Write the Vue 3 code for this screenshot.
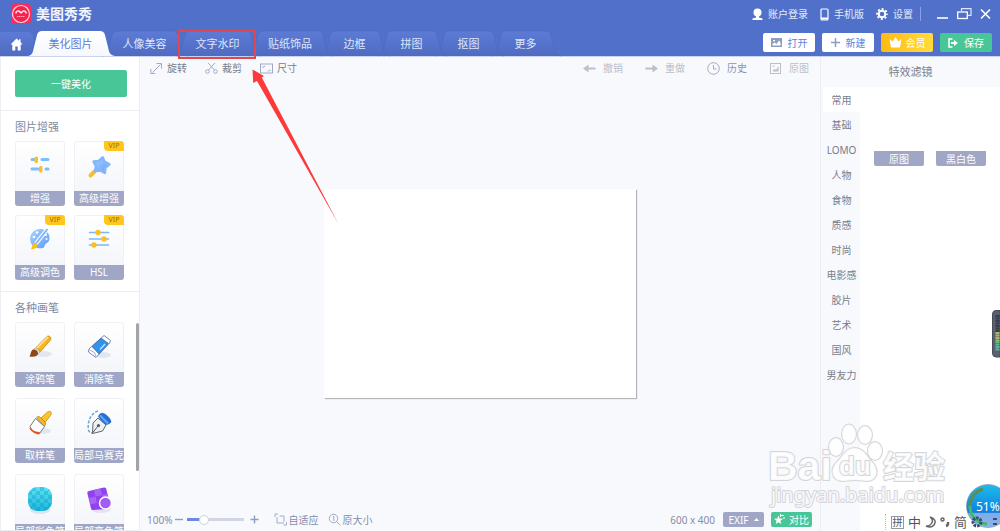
<script setup>
import { ref } from 'vue'

const tabs = [
  { name: '美化图片', w: 75 },
  { name: '人像美容', w: 73 },
  { name: '文字水印', w: 73 },
  { name: '贴纸饰品', w: 72 },
  { name: '边框', w: 57 },
  { name: '拼图', w: 57 },
  { name: '抠图', w: 57 },
  { name: '更多', w: 57 },
]
const activeTab = ref('美化图片')
const tabPath = (w) =>
  `M-5 25 C0 24 0 20 1 16 L4 4 Q5 0 9 0 H${w - 8} Q${w - 4} 0 ${w - 3} 4 L${w} 16 C${w + 1} 20 ${w + 1} 24 ${w + 7} 25`

const enhanceTools = [
  { name: '增强', icon: 'enhance' },
  { name: '高级增强', icon: 'wand', vip: true },
  { name: '高级调色', icon: 'palette', vip: true },
  { name: 'HSL', icon: 'hsl', vip: true },
]
const brushTools = [
  { name: '涂鸦笔', icon: 'brush' },
  { name: '消除笔', icon: 'eraser' },
  { name: '取样笔', icon: 'paint' },
  { name: '局部马赛克', icon: 'pen' },
  { name: '局部彩色笔', icon: 'mosaic' },
  { name: '局部变色笔', icon: 'recolor' },
]

const checks = []
for (let r = 0; r < 6; r++)
  for (let c = 0; c < 6; c++)
    if ((r + c) % 2) checks.push(`<rect x="${13 + c * 4}" y="${13 + r * 4}" width="4" height="4"/>`)

const art = {
  enhance: `<g stroke-width="3" stroke-linecap="round"><path d="M17 18.500h3M27 18.500h6M17 28h6M31 28h2" stroke="#7cbdfb"/></g><rect x="19.500" y="15.500" width="3.500" height="6.500" rx="1.500" fill="#fdbf1f"/><rect x="24" y="25" width="3.500" height="6.500" rx="1.500" fill="#fdbf1f"/>`,
  wand: `<path d="M16.500 34.500l4-4" stroke="#fdbf1f" stroke-width="4" stroke-linecap="round"/><path d="M28.600 16.300L30.800 21L35.400 23.200L31.400 26.800L30.900 32L26.100 29.400L20.800 30.300L22 25.200L19.600 20.600L24.800 20Z" fill="url(#gBlue)" stroke="#83b6fa" stroke-width="2.500" stroke-linejoin="round"/>`,
  palette: `<path d="M15.500 27c-2-7 3-13 10-13 6 0 9.500 5 9 10-.3 3-2.500 4-4 5-1.500 1.500 0 4-4 4.300-5 .3-9.700-2-11-6.300z" fill="url(#gBlue)"/><g fill="#fff"><circle cx="19" cy="22" r="1.300"/><circle cx="22" cy="17.500" r="1.300"/><circle cx="31" cy="20" r="1"/><circle cx="31.500" cy="24" r="1"/></g><path d="M33 13.500L21 28.500" stroke="#fff" stroke-width="4"/><path d="M32.500 14L21 28.500" stroke="#7fb4f7" stroke-width="2"/><path d="M18 29c2-2 5 0 4 2.500-1 2.500-4 3-6 2.500 1-1 .7-3 2-5z" fill="#fdbf1f"/>`,
  hsl: `<g stroke="#7cb8f7" stroke-width="1.600" stroke-linecap="round"><path d="M15.500 17.500h19M15.500 24h19M15.500 30h19"/></g><g fill="#fdbf1f"><circle cx="24" cy="17.500" r="2.700"/><circle cx="30" cy="24" r="2.700"/><circle cx="20" cy="30" r="2.700"/></g>`,
  brush: `<ellipse cx="28" cy="32" rx="9" ry="3" fill="#e3e6ef"/><path d="M21 25.500L32 14.500c2-1.500 5 1 3.500 3.500L25.500 29.500z" fill="#f7b520" stroke="#c58318" stroke-width=".8"/><path d="M22 26L33 15" stroke="#ffe48b" stroke-width="1.700"/><path d="M20 26l5 4-2 2-5-4z" fill="#eceef2" stroke="#a67a3c" stroke-width=".5"/><path d="M18 27.500c3-.5 5.500 2 5 4.500-1 3-5 3-8.500 2.500 1.500-1.500.5-5 3.500-7z" fill="#8f4a14"/>`,
  eraser: `<ellipse cx="29" cy="33" rx="8" ry="3" fill="#e3e6ef"/><g stroke="#506c9b" stroke-width=".8" stroke-linejoin="round"><path d="M30 13.500l6.500 5-1 2.500L22 35.500l-7.500-5.500.5-3z" fill="#fff"/><path d="M27 16l7.500 5.500-9.500 10.500-7-7.500z" fill="#2f92ec"/></g><path d="M26 27.500l5-5.500" stroke="#b7e2ff" stroke-width="1.500"/><path d="M22 34.500l-1.500-4-5-2.500" fill="none" stroke="#8b9bb5" stroke-width=".8"/>`,
  paint: `<ellipse cx="28" cy="33" rx="8" ry="3" fill="#e3e6ef"/><path d="M26 20l6.500-6c3-2 5 1 3 3.500L30 24.500z" fill="#ffc528" stroke="#c58d16" stroke-width=".8"/><path d="M21.500 19.500c2-2 3.500-.5 4.500.5l4 4c1 1.500 1 3-1 4.500z" fill="#f5b82a" stroke="#b97e1c" stroke-width=".8"/><path d="M20.500 20.500l9 8-5 7c-4 0-8-3-9.500-7z" fill="#fff" stroke="#74777f" stroke-width="1"/><path d="M15 29.500c2 3 6 4.500 10 4.500l-1 2.500c-4-.5-8-3-9.500-6z" fill="#e85222"/>`,
  pen: `<path d="M24 13c-7 2-11 11-9.500 19 .5 2 2 3 4 3" fill="none" stroke="#6ea7dd" stroke-width="1.500" stroke-dasharray="3 1.500"/><path d="M24.500 18.500c1-3 3.500-4 6-2.500 3 1.500 6 5 6.500 8-1.500 2-4 2.500-6.500 2.500z" fill="#2471dc" stroke="#1550ac" stroke-width=".7"/><path d="M26 17.500l8 8" stroke="#63a5fa" stroke-width="2"/><path d="M24 20l8 7-3.500 6-10 2.500.5-10.500z" fill="#edf1f4" stroke="#5d6672" stroke-width="1"/><path d="M18.500 35l5.500-7" stroke="#505965" stroke-width="1"/><circle cx="24.500" cy="27.500" r="1.600" fill="#505965"/>`,
  mosaic: `<ellipse cx="25" cy="36" rx="10" ry="4" fill="#d8e7ef"/><rect x="13" y="13" width="24" height="24" rx="9" fill="url(#gCyan)"/><g fill="#0093bd" opacity=".3" clip-path="url(#cBlob)">${checks.join('')}</g>`,
  recolor: `<ellipse cx="27" cy="35" rx="10" ry="4" fill="#e5e1f3"/><path d="M15 17l15-3.500q2-.3 2.300 1.500L36 32l-3 3-14 1q-1.500 0-2-1.500L13.300 19q-.3-1.500 1.700-2z" fill="#9141ee"/><path d="M20 16l6.500-1.500 1.500 6.500-6.500 1.500zM15 24l6.500-1.500 1.500 6.500-6.500 1.500zM28 21l5.500-1.500 1 5.500-5 2z" fill="#a665f5"/><circle cx="31.500" cy="29" r="6" fill="#a05cf5" stroke="#fff" stroke-width="1.500"/>`,
}

const glyph = {
  rotate: `<path d="M2.500 10.500l8-8M6.500 1.500h5v5M.8 7v4.500h4.500" />`,
  crop: `<circle cx="2.500" cy="9.500" r="1.800"/><circle cx="10.500" cy="9.500" r="1.800"/><path d="M3.500 8L10 .8M9.500 8L3 .8"/>`,
  size: `<rect x=".5" y="2" width="12" height="9"/><path d="M3 6V4.300h3M10 7.500v1.500H7.500" stroke-dasharray="1.500 .8"/>`,
  undo: `<path d="M12.500 6.500H4" stroke-width="2"/><path d="M0 6.500L5.500 2.500v8z" fill="currentColor" stroke="none"/>`,
  redo: `<path d="M.5 6.500H9" stroke-width="2"/><path d="M13 6.500L7.500 2.500v8z" fill="currentColor" stroke="none"/>`,
  history: `<circle cx="6.500" cy="6.500" r="5.800"/><path d="M6.500 3v4h3"/>`,
  original: `<rect x="1.500" y="1.500" width="10" height="10"/><path d="M4 9.500V8l2-1 1 1 2.500-4v5.500z" fill="currentColor" stroke="none"/><path d="M3.500 4h2"/>`,
  fit: `<path d="M1 4V1h3M3 4v6h7M5.500 3H10v6M9.500 12H12.500V9"/>`,
  actual: `<circle cx="5.500" cy="5.500" r="4.200"/><path d="M8.800 8.800l3.500 3.500M4.800 4l1-.5V8"/>`,
}

const leftActions = [
  { name: '旋转', icon: 'rotate' },
  { name: '裁剪', icon: 'crop' },
  { name: '尺寸', icon: 'size' },
]
const rightActions = [
  { name: '撤销', icon: 'undo', off: true },
  { name: '重做', icon: 'redo', off: true },
  { name: '历史', icon: 'history' },
  { name: '原图', icon: 'original', off: true },
]

const categories = ['常用', '基础', 'LOMO', '人物', '食物', '质感', '时尚', '电影感', '胶片', '艺术', '国风', '男友力']
const category = ref('常用')
const filters = ['原图', '黑白色']
const zoom = ref(25)
</script>

<template>
  <div class="app">
    <svg class="defs" aria-hidden="true">
      <defs>
        <linearGradient id="gBlue" x1="0" y1="0" x2="1" y2="1"><stop offset="0" stop-color="#abd3ff" /><stop offset="1" stop-color="#5f9df5" /></linearGradient>
        <linearGradient id="gCyan" x1="0" y1="0" x2="0" y2="1"><stop offset="0" stop-color="#5be3f2" /><stop offset="1" stop-color="#1fb4dc" /></linearGradient>
        <linearGradient id="gTab" x1="0" y1="0" x2="0" y2="1"><stop offset="0" stop-color="#5d7bd6" /><stop offset="1" stop-color="#4f6bc1" /></linearGradient>
        <linearGradient id="gTabOn" x1="0" y1="0" x2="0" y2="1"><stop offset="0" stop-color="#ffffff" /><stop offset="1" stop-color="#f6f8fd" /></linearGradient>
        <linearGradient id="gBall" x1="0" y1="0" x2="0" y2="1"><stop offset="0" stop-color="#1cbcec" /><stop offset=".65" stop-color="#117fdc" /><stop offset=".66" stop-color="#7faae9" /><stop offset="1" stop-color="#8db3ec" /></linearGradient>
        <clipPath id="cBlob"><rect x="13" y="13" width="24" height="24" rx="9" /></clipPath>
      </defs>
    </svg>

    <header class="top">
      <div class="titlebar">
        <svg class="logo" viewBox="0 0 20 20" aria-hidden="true">
          <rect width="20" height="20" rx="4" fill="#fb2c5b" />
          <circle cx="10" cy="10" r="8.500" fill="#f8224f" stroke="#ffd5de" stroke-width="1.200" />
          <path d="M5 9.500V8.500Q7 5.500 9 8l1 .8 1-.8q2-2.500 4 .5v1" fill="none" stroke="#fff" stroke-width="1.400" />
          <path d="M6 12.500h8" stroke="#ffb7c6" stroke-width="1.200" stroke-dasharray="1.500 .5" />
        </svg>
        <h1>美图秀秀</h1>
        <nav class="account">
          <button class="plain">
            <svg width="11" height="13" viewBox="0 0 11 13"><circle cx="5.500" cy="4.500" r="4" fill="#fff" /><path d="M4 8h3v1.500l3.500 1V12H.5v-1.500l3.500-1z" fill="#fff" /></svg>账户登录
          </button>
          <button class="plain">
            <svg width="9" height="13" viewBox="0 0 9 13"><rect x="1" y="1" width="7" height="11" rx="1" fill="none" stroke="#fff" stroke-width="1.200" /><path d="M1 10.500h7" stroke="#fff" stroke-width="2" /></svg>手机版
          </button>
          <button class="plain">
            <svg width="12" height="12" viewBox="0 0 12 12"><circle cx="6" cy="6" r="3.300" fill="none" stroke="#fff" stroke-width="2" /><circle cx="6" cy="6" r="5" fill="none" stroke="#fff" stroke-width="1.800" stroke-dasharray="2 1.927" stroke-dashoffset="1" /></svg>设置
          </button>
        </nav>
        <div class="window">
          <button class="plain" aria-label="最小化"><svg width="12" height="14" viewBox="0 0 12 14"><path d="M0 11h11" stroke="#fff" stroke-width="1.600" /></svg></button>
          <button class="plain" aria-label="还原"><svg width="15" height="14" viewBox="0 0 15 14"><path d="M4.500 4V1.700h9.500v6.600h-3" fill="none" stroke="#dfe6fa" stroke-width="1.200" /><rect x=".7" y="5" width="9.600" height="6.500" fill="none" stroke="#fff" stroke-width="1.300" /></svg></button>
          <button class="plain" aria-label="关闭"><svg width="11" height="14" viewBox="0 0 11 14"><path d="M1 2.500l9 9M10 2.500l-9 9" stroke="#fff" stroke-width="1.600" /></svg></button>
        </div>
      </div>
      <div class="tabbar">
        <button class="home" aria-label="首页">
          <svg width="13" height="13" viewBox="0 0 13 13"><path d="M6.500.5L.5 6.500h1.800V12.500h3V8.500h2.400v4h3V6.500h1.800L10.500 4V1.200H9v1.500z" fill="#fff" /></svg>
        </button>
        <button
          v-for="(t, i) in tabs"
          :key="t.name"
          class="tab"
          :class="{ on: t.name === activeTab }"
          :style="{ width: t.w + 'px', zIndex: t.name === activeTab ? 20 : 10 - i }"
          @click="activeTab = t.name"
        >
          <svg class="shape" :viewBox="`0 0 ${t.w} 25`" aria-hidden="true">
            <path :d="tabPath(t.w)" :fill="t.name === activeTab ? 'url(#gTabOn)' : 'url(#gTab)'" stroke="#4a66bb" :stroke-width="t.name === activeTab ? 0 : 0.5" />
          </svg>
          <span>{{ t.name }}</span>
        </button>
        <div class="files">
          <button class="file">
            <svg width="11" height="9" viewBox="0 0 11 9"><rect width="11" height="9" fill="#909dc2" /><path d="M1.500 7.500V6l2-1.500L5.500 6l2.500-3.500 1.500 2v3zM2 2h2v1.300H2z" fill="#fff" /></svg>打开
          </button>
          <button class="file">
            <svg width="9" height="9" viewBox="0 0 9 9"><path d="M4.500 0v9M0 4.500h9" stroke="#909dc2" stroke-width="1.500" /></svg>新建
          </button>
          <button class="file gold">
            <svg width="13" height="11" viewBox="0 0 13 11"><path d="M.5 2l3 2.500L6.500 0l3 4.500 3-2.500-1.500 8.500H2z" fill="#fff" /></svg>会员
          </button>
          <button class="file green">
            <svg width="10" height="10" viewBox="0 0 10 10"><path d="M4.500 1H1v8h3.500" fill="none" stroke="#fff" stroke-width="1.500" /><path d="M3 4h3V2l4 3-4 3V6H3z" fill="#fff" /></svg>保存
          </button>
        </div>
      </div>
    </header>

    <main class="body">
      <aside class="side">
        <div class="auto"><button>一键美化</button></div>
        <section class="group">
          <h2>图片增强</h2>
          <div class="cards">
            <button v-for="t in enhanceTools" :key="t.name" class="card">
              <svg viewBox="0 0 50 50" v-html="art[t.icon]" />
              <span class="name">{{ t.name }}</span>
              <span v-if="t.vip" class="vip">VIP</span>
            </button>
          </div>
        </section>
        <section class="group brushes">
          <h2>各种画笔</h2>
          <div class="cards">
            <button v-for="t in brushTools" :key="t.name" class="card">
              <svg viewBox="0 0 50 50" v-html="art[t.icon]" />
              <span class="name">{{ t.name }}</span>
            </button>
          </div>
          <div class="scroll"></div>
        </section>
      </aside>

      <section class="work">
        <div class="toolbar">
          <div class="acts">
            <button v-for="a in leftActions" :key="a.name" class="act"><svg viewBox="0 0 13 13" v-html="glyph[a.icon]" />{{ a.name }}</button>
          </div>
          <div class="acts wide">
            <button v-for="a in rightActions" :key="a.name" class="act" :class="{ off: a.off }"><svg viewBox="0 0 13 13" v-html="glyph[a.icon]" />{{ a.name }}</button>
          </div>
        </div>
        <div class="stage"><div class="paper"></div></div>
        <div class="status">
          <label for="zoom">100%</label>
          <button class="step" aria-label="缩小"><svg width="9" height="9" viewBox="0 0 9 9"><path d="M0 4.500h8" stroke="#909cc4" stroke-width="1.400" /></svg></button>
          <input id="zoom" v-model="zoom" type="range" min="0" max="100" :style="{ '--fill': zoom + '%' }" />
          <button class="step" aria-label="放大"><svg width="9" height="9" viewBox="0 0 9 9"><path d="M4.500 .5v8M.5 4.500h8" stroke="#909cc4" stroke-width="1.400" /></svg></button>
          <button class="view fit"><svg viewBox="0 0 13 13" v-html="glyph.fit" />自适应</button>
          <button class="view"><svg viewBox="0 0 13 13" v-html="glyph.actual" />原大小</button>
          <span class="dims">600 x 400</span>
          <button class="pill">EXIF<svg width="5" height="3" viewBox="0 0 5 3"><path d="M0 3L2.500 0 5 3z" fill="#fff" /></svg></button>
          <button class="pill green">
            <svg width="11" height="11" viewBox="0 0 11 11"><path d="M4.500 1.500l1.200 3 3.300.2-2.500 2 .8 3.300-2.800-1.800L1.700 10l.8-3.300-2.500-2 3.300-.2z" fill="#fff" /><path d="M7 1.500h3M9 4h2M6.500 0v3" stroke="#fff" /></svg>对比
          </button>
        </div>
      </section>

      <aside class="effects">
        <h2>特效滤镜</h2>
        <div class="panes">
          <nav class="cats">
            <button v-for="c in categories" :key="c" :class="{ on: c === category }" @click="category = c">{{ c }}</button>
          </nav>
          <div class="filters">
            <button v-for="f in filters" :key="f">{{ f }}</button>
          </div>
        </div>
      </aside>
    </main>

    <svg class="note" width="180" height="200" viewBox="0 0 180 200" aria-hidden="true">
      <rect x="9" y="1" width="76" height="27" fill="none" stroke="#e2474f" stroke-width="2" />
      <path d="M82.500 39.500L94 46l-2.200 1.600L168.500 194 87 51l-3.800 2z" fill="#fb3a39" />
    </svg>

    <svg class="mark" width="184" height="92" viewBox="0 0 184 92" aria-hidden="true">
      <g fill="#fff" fill-opacity=".85" stroke="#d3d5da" stroke-width="2" stroke-linejoin="round" paint-order="stroke">
        <text x="2" y="61" font-size="41" font-family="Liberation Sans, sans-serif" font-weight="700">Bai</text>
        <ellipse cx="70" cy="28" rx="7" ry="9" />
        <ellipse cx="83" cy="15" rx="7" ry="9.500" />
        <ellipse cx="99" cy="16" rx="7" ry="9" />
        <ellipse cx="109" cy="32" rx="7" ry="9" />
        <path d="M89 29c9 0 12 9 17 14 8 8 5 19-5 19-4 0-7-1-12-1s-8 1-12 1c-11 0-14-11-6-19 6-6 9-14 18-14z" />
        <text x="73" y="56" font-size="26" font-family="Liberation Sans, sans-serif" font-weight="700">du</text>
        <text x="117" y="59" font-size="31" font-family="Noto Sans CJK SC, sans-serif" font-weight="700">经验</text>
        <text x="5" y="83" font-size="20" font-family="Noto Sans, sans-serif">jingyan.baidu.com</text>
      </g>
    </svg>

    <svg class="meter" width="8" height="48" viewBox="0 0 8 48" aria-hidden="true">
      <path d="M8 .5H4Q.5 .5 .5 4v39q0 4 3.500 4H8z" fill="#5b6071" stroke="#484c5b" />
      <path d="M5.500 5v17" stroke="#383d4b" stroke-width="4" stroke-dasharray="2 .5" />
      <path d="M5.500 22v9" stroke="#a4bd63" stroke-width="4" stroke-dasharray="2 .5" />
      <path d="M5.500 31v10" stroke="#58b6a0" stroke-width="4" stroke-dasharray="2 .5" />
    </svg>

    <div class="ime">
      <span class="boxed">拼</span>
      <span>中</span>
      <svg width="11" height="12" viewBox="0 0 11 12"><path d="M5 1q5 4 0 8-2 1.500-4 1 5 2.500 8-1Q12.500 3.500 5 1z" fill="none" stroke="#666" stroke-width="1.500" /></svg>
      <svg width="10" height="12" viewBox="0 0 10 12"><circle cx="2.500" cy="3.500" r="1.500" fill="none" stroke="#666" stroke-width="1.500" /><path d="M8 6v1.500q0 2-2 2.500" stroke="#666" stroke-width="2.500" fill="none" /></svg>
      <span>简</span>
    </div>

    <svg class="ball" width="35" height="46" viewBox="0 0 35 46" aria-hidden="true">
      <circle cx="23" cy="23" r="21.500" fill="url(#gBall)" stroke="#7b8ea0" stroke-opacity=".6" />
      <path d="M18 6A17.500 17.500 0 0 0 5 23" fill="none" stroke="#638b50" stroke-width="3" />
      <path d="M5 23A17.500 17.500 0 0 0 22 41" fill="none" stroke="#43b867" stroke-width="3" />
      <circle cx="12" cy="39" r="4" fill="none" stroke="#34506f" stroke-width="3" stroke-dasharray="2.500 1" />
      <path d="M28 36h4M28 41h4" stroke="#34506f" stroke-width="2" />
      <text x="11" y="28" font-size="12" font-family="Noto Sans, sans-serif" fill="#fff">51%</text>
    </svg>
  </div>
</template>

<style>
body {
  overflow: hidden;
}
</style>

<style scoped>
.app {
  position: relative;
  display: flex;
  flex-direction: column;
  height: 100vh;
  overflow: hidden;
  background: #f8f9fd;
  color: #777d8b;
  font: 10px/14px "Noto Sans", "Noto Sans CJK SC", sans-serif;
}
button {
  padding: 0;
  border: 0;
  background: none;
  color: inherit;
  font: inherit;
  white-space: nowrap;
  cursor: pointer;
}
h1,
h2 {
  margin: 0;
}
svg {
  flex: none;
}
.defs {
  position: absolute;
  width: 0;
  height: 0;
}
.top {
  background: #5070c9;
  border-bottom: 1px solid #c9d3ef;
}
.titlebar {
  display: flex;
  align-items: center;
  height: 28px;
  padding: 0 9px 0 11px;
  color: #e6ebfa;
}
.logo {
  width: 20px;
  height: 20px;
}
h1 {
  margin-left: 5px;
  color: #f0f3fd;
  font-size: 14px;
  line-height: 20px;
  font-weight: 700;
}
.account {
  display: flex;
  gap: 12px;
  margin-left: auto;
  padding-right: 7px;
}
.plain {
  display: flex;
  align-items: center;
  gap: 5px;
}
.window {
  display: flex;
  gap: 8px;
  padding-left: 16px;
  border-left: 1px solid #8ba0dd;
}
.tabbar {
  display: flex;
  align-items: flex-end;
  height: 28px;
  padding-right: 8px;
}
.home {
  display: flex;
  align-items: center;
  justify-content: center;
  width: 33px;
  height: 24px;
  border-radius: 0 5px 0 0;
  background: linear-gradient(#5d7bd6, #4f6bc1);
}
.tab {
  position: relative;
  flex: none;
  height: 25px;
  color: #dfe6fa;
  font-size: 11px;
  line-height: 24px;
}
.tab.on {
  color: #5d7bd8;
}
.tab span {
  position: relative;
}
.shape {
  position: absolute;
  inset: 0;
  overflow: visible;
}
.files {
  display: flex;
  gap: 7px;
  margin-left: auto;
  padding-bottom: 4px;
}
.file {
  display: flex;
  align-items: center;
  justify-content: center;
  gap: 6px;
  width: 52px;
  height: 19px;
  border-radius: 2px;
  background: #fff;
  color: #6480dc;
}
.file.gold {
  gap: 4px;
  background: linear-gradient(90deg, #ffba13, #ffdc3d);
  color: #fff;
}
.file.green,
.pill.green {
  background: #48c698;
  color: #fff;
}
.body {
  display: flex;
  flex: 1;
  min-height: 0;
}
.side {
  display: flex;
  flex-direction: column;
  width: 138px;
  border: solid #eceef4;
  border-width: 0 1px;
  background: #fff;
}
.auto {
  padding: 13px 12px 13px 14px;
  border-bottom: 1px solid #eceef2;
}
.auto button {
  width: 100%;
  height: 27px;
  border-radius: 2px;
  background: #48c698;
  color: #fff;
}
.group {
  padding: 8px 14px 11px;
  border-bottom: 1px solid #eceef2;
}
h2 {
  color: #8189a5;
  font-size: 11px;
  line-height: 16px;
  font-weight: 400;
}
.cards {
  display: grid;
  grid-template-columns: 50px 50px;
  gap: 9px;
  margin-top: 6px;
}
.card {
  position: relative;
  display: flex;
  flex-direction: column;
  height: 65px;
  overflow: hidden;
  border-radius: 3px;
  background: linear-gradient(#fff, #f1f3f9);
  box-shadow: inset 0 0 0 1px #f0f1f5;
}
.card svg {
  width: 50px;
  height: 50px;
}
.name {
  align-self: stretch;
  height: 15px;
  background: #a0a7c6;
  color: #fff;
  line-height: 15px;
}
.vip {
  position: absolute;
  top: 0;
  right: 0;
  width: 20px;
  height: 10px;
  border-radius: 0 2px 0 4px;
  background: #ffc61d;
  color: #a26a10;
  font-size: 7px;
  line-height: 10px;
}
.brushes {
  position: relative;
  flex: 1;
  min-height: 0;
  overflow: hidden;
  padding-bottom: 0;
}
.brushes .cards {
  row-gap: 11px;
}
.scroll {
  position: absolute;
  top: 31px;
  right: 0;
  width: 3px;
  height: 148px;
  border-radius: 2px;
  background: #a3a4a8;
}
.work {
  display: flex;
  flex: 1;
  flex-direction: column;
  min-width: 0;
}
.toolbar {
  display: flex;
  justify-content: space-between;
  height: 22px;
  padding: 0 11px 2px 10px;
}
.acts {
  display: flex;
  gap: 18px;
}
.act,
.view {
  display: flex;
  align-items: center;
  gap: 4px;
}
.act svg,
.view svg {
  width: 13px;
  height: 13px;
  fill: none;
  stroke: currentColor;
  stroke-width: 1;
  color: #a0a9c9;
}
.wide {
  gap: 22px;
  color: #8b93ab;
}
.wide .act {
  gap: 7px;
}
.wide .off,
.wide .off svg {
  color: #bcbfc9;
}
.stage {
  display: flex;
  flex: 1;
  align-items: center;
  justify-content: center;
  min-height: 0;
}
.paper {
  width: 46%;
  aspect-ratio: 3 / 2;
  background: #fff;
  box-shadow: 1px 1px 1px #b4b5b8;
}
.status {
  display: flex;
  align-items: center;
  height: 23px;
  padding: 2px 8px 0 7px;
  color: #858da9;
}
.step {
  display: flex;
  margin: 0 3px;
}
#zoom {
  width: 57px;
  height: 12px;
  margin: 0 3px 0 0;
  appearance: none;
  background: linear-gradient(90deg, #6b88e6 var(--fill), #d2d5e3 var(--fill)) center / 100% 3px no-repeat;
}
#zoom::-webkit-slider-thumb {
  width: 10px;
  height: 10px;
  appearance: none;
  border: 1px solid #cdd0dc;
  border-radius: 50%;
  background: #fff;
}
.view {
  gap: 1px;
}
.fit {
  margin: 0 10px 0 12px;
}
.dims {
  margin: 0 8px 0 auto;
}
.pill {
  display: flex;
  align-items: center;
  justify-content: center;
  gap: 5px;
  width: 41px;
  height: 15px;
  border-radius: 2px;
  background: #a0a7c6;
  color: #fff;
}
.pill.green {
  gap: 4px;
  margin-left: 7px;
}
.effects {
  display: flex;
  flex-direction: column;
  width: 179px;
  border-left: 1px solid #eceef4;
}
.effects h2 {
  padding: 7px 0;
  color: #777d8b;
  text-align: center;
}
.panes {
  display: flex;
  flex: 1;
  min-height: 0;
  background: #fff;
}
.cats {
  display: flex;
  flex-direction: column;
  width: 37px;
  padding-left: 2px;
  background: #f8f9fd;
}
.cats button {
  height: 25px;
}
.cats .on {
  background: #fff;
}
.filters {
  display: flex;
  gap: 12px;
  align-items: flex-start;
  padding: 64px 14px 0;
}
.filters button {
  width: 50px;
  height: 15px;
  border-radius: 0 0 2px 2px;
  background: #a0a7c6;
  color: #fff;
}
.note,
.mark,
.meter,
.ime,
.ball {
  position: absolute;
  z-index: 30;
  pointer-events: none;
}
.note {
  left: 170px;
  top: 30px;
}
.mark {
  right: 50px;
  bottom: 20px;
}
.meter {
  right: 0;
  top: 310px;
}
.ime {
  right: 33px;
  bottom: 1px;
  display: flex;
  align-items: center;
  gap: 4px;
  height: 16px;
  padding-left: 5px;
  border-left: 1px dotted #bbb;
  color: #555;
  font-size: 13px;
  line-height: 14px;
}
.boxed {
  width: 11px;
  height: 11px;
  border: 1px solid #999;
  font-size: 10px;
  line-height: 10px;
  text-align: center;
}
.ball {
  right: 0;
  bottom: 2px;
}
</style>
